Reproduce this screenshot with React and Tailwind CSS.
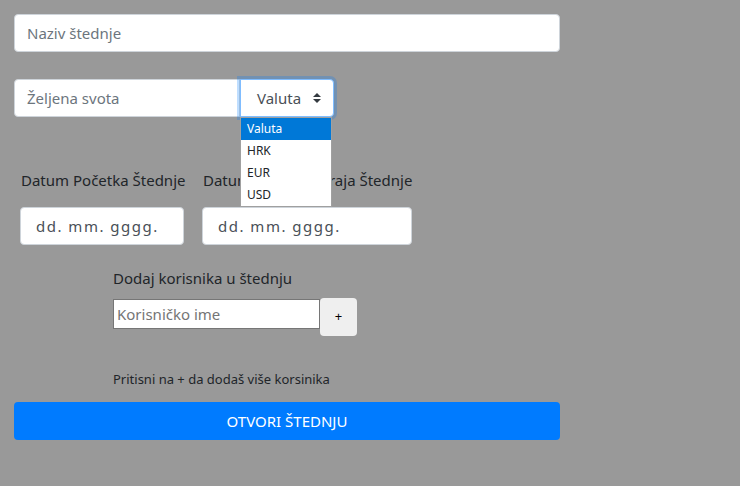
import React from 'react';

function SelectArrows() {
  return (
    <svg width="8" height="10" viewBox="0 0 8 10" className="ml-auto">
      <path d="M4 0 L8 4 H0 Z" fill="#343a40" />
      <path d="M4 10 L0 6 H8 Z" fill="#343a40" />
    </svg>
  );
}

export default function App() {
  const font = { fontFamily: '"Noto Sans", "Open Sans", sans-serif' };
  return (
    <div className="min-h-screen w-full bg-[#999999] text-[#212529]" style={font}>
      <div className="pt-[14px] pl-[14px] w-[560px]">
        <div className="h-[38px] w-[546px] bg-white border border-[#ced4da] rounded-[4px] flex items-center px-[12px] text-[15px] text-[#6c757d]">
          Naziv štednje
        </div>

        <div className="mt-[27px] flex">
          <div className="h-[38px] w-[226px] bg-white border border-[#ced4da] rounded-l-[4px] flex items-center px-[12px] text-[15px] text-[#6c757d]">
            Željena svota
          </div>
          <div className="relative">
            <div className="h-[38px] w-[94px] bg-white border border-[#80bdff] rounded-r-[4px] shadow-[0_0_0_3px_rgba(0,123,255,0.25)] flex items-center pl-[16px] pr-[12px] text-[15px] text-[#495057]">
              Valuta
              <SelectArrows />
            </div>
            <div className="absolute left-0 top-[38px] w-[92px] bg-white border border-[#a0a0a0] z-10 text-[12px]">
              <div className="h-[22px] flex items-center px-[6px] bg-[#0078d7] text-white">Valuta</div>
              <div className="h-[22px] flex items-center px-[6px] text-[#212529]">HRK</div>
              <div className="h-[22px] flex items-center px-[6px] text-[#212529]">EUR</div>
              <div className="h-[22px] flex items-center px-[6px] text-[#212529]">USD</div>
            </div>
          </div>
        </div>

        <div className="mt-[51px] ml-[6px] flex gap-[18px]">
          <div className="w-[164px]">
            <div className="h-[24px] leading-[24px] text-[15px] pl-[1px] whitespace-nowrap">Datum Početka Štednje</div>
            <div className="mt-[15px] h-[38px] bg-white border border-[#ced4da] rounded-[4px] flex items-center pl-[15px] text-[15px] tracking-[1.5px] text-[#495057] whitespace-nowrap">
              dd. mm. gggg.
            </div>
          </div>
          <div className="w-[210px]">
            <div className="h-[24px] leading-[24px] text-[15px] pl-[1px] whitespace-nowrap">Datum Željenog Kraja Štednje</div>
            <div className="mt-[15px] h-[38px] bg-white border border-[#ced4da] rounded-[4px] flex items-center pl-[15px] text-[15px] tracking-[1.5px] text-[#495057] whitespace-nowrap">
              dd. mm. gggg.
            </div>
          </div>
        </div>

        <div className="ml-[99px] mt-[21px]">
          <div className="h-[24px] leading-[24px] text-[15px]">Dodaj korisnika u štednju</div>
          <div className="mt-[8px] flex items-start">
            <div className="mt-[1px] h-[30px] w-[207px] bg-white border border-[#767676] flex items-center px-[3px] text-[15px] text-[#757575]">
              Korisničko ime
            </div>
            <div className="h-[38px] w-[37px] bg-[#efefef] rounded-[4px] flex items-center justify-center text-[13px] text-black">
              +
            </div>
          </div>
          <div className="mt-[33px] h-[20px] leading-[20px] text-[13px]">Pritisni na + da dodaš više korsinika</div>
        </div>

        <div className="mt-[13px] h-[38px] w-[546px] bg-[#007bff] rounded-[4px] flex items-center justify-center text-white text-[15px]">
          OTVORI ŠTEDNJU
        </div>
      </div>
    </div>
  );
}
